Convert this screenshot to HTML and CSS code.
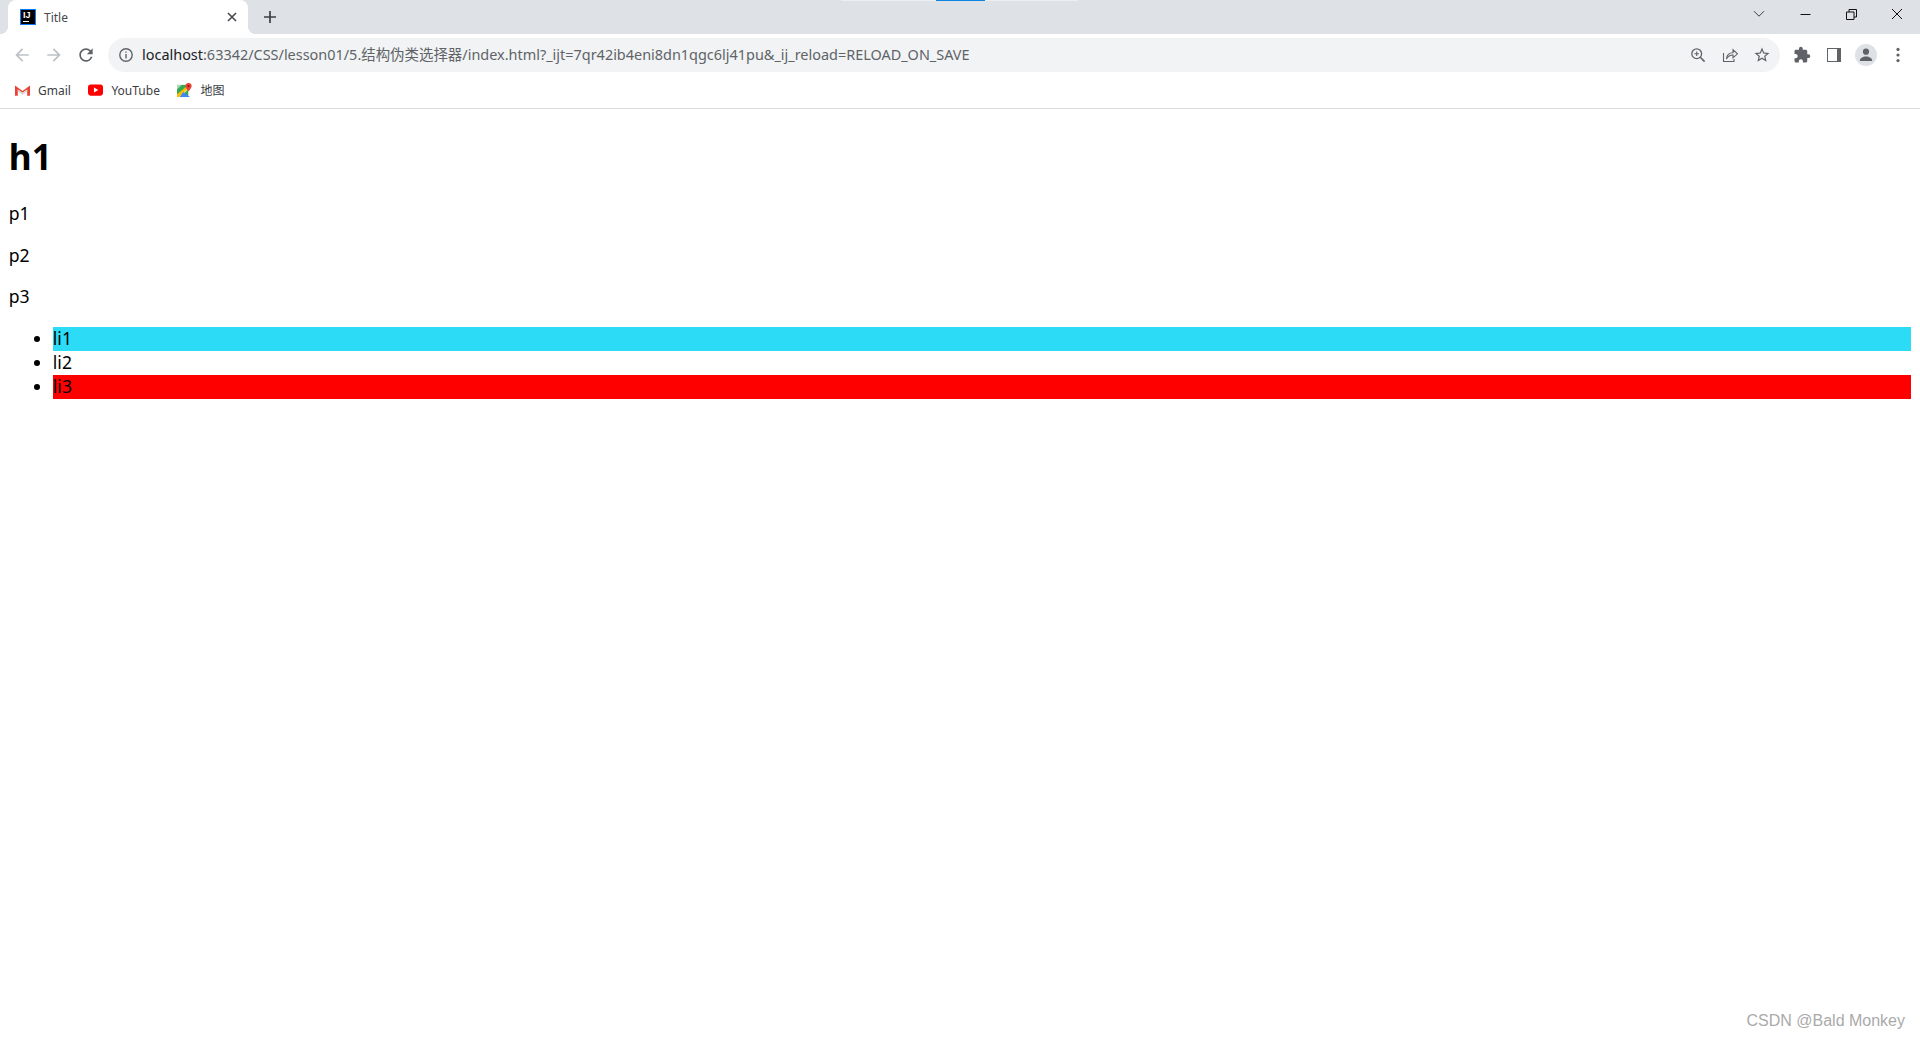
FILE: index.html
```html
<!DOCTYPE html>
<html lang="zh-CN">
<head>
<meta charset="UTF-8">
<title>Title</title>
<link rel="stylesheet" href="styles.css">
</head>
<body>
<header class="chrome">
    <div class="tabstrip">
        <div class="topmark"></div>
        <div class="tab">
            <div class="favicon"><span class="favicon-text">IJ</span><span class="favicon-line"></span></div>
            <span class="tab-title">Title</span>
            <svg class="tab-close" width="16" height="16" viewBox="0 0 16 16"><path d="M4 4l8 8M12 4l-8 8" stroke="#45494d" stroke-width="1.6" fill="none"/></svg>
        </div>
        <div class="newtab">
            <svg width="14" height="14" viewBox="0 0 14 14"><path d="M7 1v12M1 7h12" stroke="#3c4043" stroke-width="1.7" fill="none"/></svg>
        </div>
        <div class="spacer"></div>
        <div class="tabsearch">
            <svg width="12" height="8" viewBox="0 0 12 8"><path d="M1 1.2l5 5 5-5" stroke="#3c4043" stroke-width="1" fill="none"/></svg>
        </div>
        <div class="winbtn"><svg width="11" height="11" viewBox="0 0 11 11"><path d="M0.5 5.5h10" stroke="#111" stroke-width="1" fill="none"/></svg></div>
        <div class="winbtn"><svg width="11" height="11" viewBox="0 0 11 11"><path d="M.5 3h7.5v7.5H.5zM3 3V.5h7.5V8H8" stroke="#111" stroke-width="1" fill="none"/></svg></div>
        <div class="winbtn"><svg width="12" height="12" viewBox="0 0 12 12"><path d="M1 1l10 10M11 1L1 11" stroke="#111" stroke-width="1" fill="none"/></svg></div>
    </div>

    <div class="toolbar">
        <div class="navbtn"><svg width="20" height="20" viewBox="0 0 24 24"><path fill="#bdc1c6" d="M20 11H7.83l5.59-5.59L12 4l-8 8 8 8 1.41-1.41L7.83 13H20v-2z"/></svg></div>
        <div class="navbtn"><svg width="20" height="20" viewBox="0 0 24 24"><path fill="#bdc1c6" d="M4 11h12.17l-5.59-5.59L12 4l8 8-8 8-1.41-1.41L16.17 13H4v-2z"/></svg></div>
        <div class="navbtn"><svg width="20" height="20" viewBox="0 0 24 24"><path fill="#5f6368" d="M17.65 6.35A7.958 7.958 0 0 0 12 4c-4.42 0-7.99 3.58-7.99 8s3.57 8 7.99 8c3.73 0 6.84-2.55 7.73-6h-2.08A5.99 5.99 0 0 1 12 18c-3.31 0-6-2.69-6-6s2.69-6 6-6c1.66 0 3.14.69 4.22 1.78L13 11h7V4l-2.35 2.35z"/></svg></div>
        <div class="omnibox">
            <svg class="info" width="16" height="16" viewBox="0 0 16 16"><circle cx="8" cy="8" r="6.2" stroke="#5f6368" stroke-width="1.4" fill="none"/><path d="M7.3 7h1.4v4.4H7.3zM7.3 4.4h1.4v1.4H7.3z" fill="#5f6368"/></svg>
            <div class="url"><span class="host">localhost</span>:63342/CSS/lesson01/5.结构伪类选择器/index.html?_ijt=7qr42ib4eni8dn1qgc6lj41pu&amp;_ij_reload=RELOAD_ON_SAVE</div>
            <div class="navbtn"><svg width="16" height="16" viewBox="0 0 16 16"><circle cx="6.7" cy="6.7" r="4.9" stroke="#5f6368" stroke-width="1.3" fill="none"/><path d="M10.3 10.3l4.3 4.3" stroke="#5f6368" stroke-width="1.6" fill="none"/><path d="M6.7 4.4v4.6M4.4 6.7H9" stroke="#5f6368" stroke-width="1.1" fill="none"/></svg></div>
            <div class="navbtn"><svg width="16" height="16" viewBox="0 0 16 16"><path d="M1.5 6v8.5h10.5V12" stroke="#5f6368" stroke-width="1.1" fill="none"/><path d="M4.5 12c.3-4 3-6.200 6.500-6.200V2.800l4.500 4-4.500 4V8c-2.800 0-5 1.300-6.500 4z" stroke="#5f6368" stroke-width="1.1" fill="none"/></svg></div>
            <div class="navbtn"><svg width="18" height="18" viewBox="0 0 24 24"><path fill="#5f6368" d="M22 9.24l-7.19-.62L12 2 9.19 8.63 2 9.24l5.46 4.73L5.82 21 12 17.27 18.18 21l-1.63-7.03L22 9.24zM12 15.4l-3.76 2.27 1-4.28-3.32-2.88 4.38-.38L12 6.100l1.710 4.040 4.380.38-3.320 2.880 1 4.280L12 15.400z"/></svg></div>
        </div>
        <div class="actions">
            <div class="navbtn"><svg width="18" height="18" viewBox="0 0 24 24"><path fill="#5f6368" d="M20.5 11H19V7c0-1.100-.9-2-2-2h-4V3.500C13 2.120 11.880 1 10.500 1S8 2.120 8 3.500V5H4c-1.100 0-1.990.9-1.990 2v3.800H3.500c1.490 0 2.700 1.210 2.700 2.700s-1.210 2.700-2.700 2.700H2V20c0 1.100.9 2 2 2h3.800v-1.500c0-1.490 1.210-2.700 2.700-2.700 1.490 0 2.700 1.210 2.700 2.700V22H17c1.100 0 2-.9 2-2v-4h1.500c1.380 0 2.500-1.120 2.500-2.500S21.880 11 20.500 11z"/></svg></div>
            <div class="navbtn"><div class="sidepanel"></div></div>
            <div class="navbtn"><div class="avatar"><svg width="16" height="16" viewBox="0 0 16 16"><circle cx="8" cy="4.700" r="3.100" fill="#5f6368"/><path d="M1.800 14c0-3 3-4.600 6.200-4.600s6.200 1.600 6.200 4.600z" fill="#5f6368"/></svg></div></div>
            <div class="navbtn"><svg width="16" height="16" viewBox="0 0 16 16"><circle cx="8" cy="2.400" r="1.600" fill="#5f6368"/><circle cx="8" cy="8" r="1.600" fill="#5f6368"/><circle cx="8" cy="13.600" r="1.600" fill="#5f6368"/></svg></div>
        </div>
    </div>

    <div class="bookmarks">
        <div class="bookmark">
            <svg width="15" height="12" viewBox="0 0 16 12"><path d="M0 12V1.200L8 7l8-5.800V12h-3V5.400L8 9 3 5.400V12z" fill="#ea4335"/><path d="M3 5.400L8 9l5-3.600V7.500L8 11 3 7.500z" fill="#d8d8d8"/></svg>
            <span>Gmail</span>
        </div>
        <div class="bookmark">
            <svg width="15" height="12" viewBox="0 0 16 12"><rect width="16" height="12" rx="3" fill="#f00"/><path d="M6.300 3.300L11 6l-4.700 2.700z" fill="#fff"/></svg>
            <span>YouTube</span>
        </div>
        <div class="bookmark">
            <svg width="15" height="15" viewBox="0 0 16 16"><path d="M0 2h12v13H0z" fill="#34a853"/><path d="M0 2h5L0 7z" fill="#a8dab5"/><path d="M0 15L12 4v3L3 15z" fill="#fbe08a"/><path d="M0 12L12 2v3L2 15H0z" fill="#fbbc04"/><path d="M6.500 9.500L14 15H3z" fill="#4285f4"/><path d="M12.300 0a3.300 3.300 0 0 0-3.300 3.300C9 5.500 12.300 9 12.300 9s3.300-3.500 3.300-5.700A3.300 3.300 0 0 0 12.300 0z" fill="#ea4335"/><circle cx="12.300" cy="3.300" r="1.200" fill="#a50e0e"/></svg>
            <span>地图</span>
        </div>
    </div>
</header>

<main class="page">
    <h1>h1</h1>
    <p>p1</p>
    <p>p2</p>
    <p>p3</p>
    <ul>
        <li class="first">li1</li>
        <li>li2</li>
        <li class="last">li3</li>
    </ul>
</main>

<div class="watermark">CSDN @Bald Monkey</div>
</body>
</html>
```

FILE: styles.css
```css
html,body{height:100%}
body{margin:0;background:#fff;color:#000;font-family:"Noto Sans","Noto Sans CJK SC",sans-serif;overflow:hidden}

.chrome{height:109px;box-sizing:border-box;border-bottom:1px solid #dadce0;background:#fff}

.tabstrip{position:relative;display:flex;height:34px;padding-left:8px;background:#dee1e6}
.topmark{position:absolute;top:0;left:841px;width:237px;height:1px;background:linear-gradient(to right,#eceef0 0,#eceef0 95px,#0a84e0 95px,#0a84e0 144px,#eceef0 144px)}
.tab{position:relative;display:flex;align-items:center;width:240px;box-sizing:border-box;padding:0 8px 0 12px;background:#fff;border-radius:8px 8px 0 0}
.tab::before,.tab::after{content:"";position:absolute;bottom:0;width:8px;height:8px}
.tab::before{left:-8px;background:radial-gradient(circle at 0 0,transparent 8px,#fff 8px)}
.tab::after{right:-8px;background:radial-gradient(circle at 100% 0,transparent 8px,#fff 8px)}
.favicon{position:relative;width:16px;height:16px;box-sizing:border-box;border:1px solid #087cfa;background:#000;color:#fff}
.favicon-text{display:block;font-size:9px;line-height:10px;font-weight:700;padding-left:2px;font-family:"Liberation Sans",sans-serif}
.favicon-line{position:absolute;left:2px;bottom:2px;width:6px;height:1px;background:#fff}
.tab-title{margin-left:8px;flex:1;font-size:12px;color:#45494d}
.newtab{display:flex;align-items:center;justify-content:center;width:28px;margin-left:8px}
.spacer{flex:1}
.tabsearch{display:flex;align-items:center;justify-content:center;width:28px;height:28px;margin-right:9px}
.winbtn{display:flex;align-items:center;justify-content:center;width:46px;height:28px}

.toolbar{display:flex;align-items:center;height:42px;padding:0 6px}
.navbtn{display:flex;align-items:center;justify-content:center;width:32px;height:32px;flex:none}
.omnibox{display:flex;align-items:center;flex:1;height:34px;margin-left:6px;padding:0 2px 0 10px;background:#f1f3f4;border-radius:17px}
.url{flex:1;margin-left:8px;padding-bottom:3px;font-size:14.44px;color:#5f6368;white-space:nowrap}
.host{color:#202124}
.actions{display:flex;margin-left:6px}
.sidepanel{width:14px;height:14px;box-sizing:border-box;border:solid #5f6368;border-width:1px 4px 1px 1px;background:#fff}
.avatar{display:flex;align-items:center;justify-content:center;width:22px;height:22px;border-radius:50%;background:#dee1e6}

.bookmarks{display:flex;align-items:center;height:28px;padding:0 0 4px 15px}
.bookmark{display:flex;align-items:center;gap:8px;margin-right:17.5px;font-size:12px;color:#3c4043}

.page{margin:0 8.8px}
h1{margin:23.6px 0;font-size:35.2px;line-height:46px;font-weight:700}
p{margin:17.6px 0;padding-bottom:1px;font-size:17.6px;line-height:23px}
ul{margin:17.6px 0;padding-left:44px;font-size:17.6px}
li{padding-bottom:1px;line-height:23px}
.first{background:#2cdcf6}
.last{background:#f00}

.watermark{position:absolute;right:15px;bottom:10px;font-family:"Liberation Sans",sans-serif;font-size:16px;color:#aaa}
```
